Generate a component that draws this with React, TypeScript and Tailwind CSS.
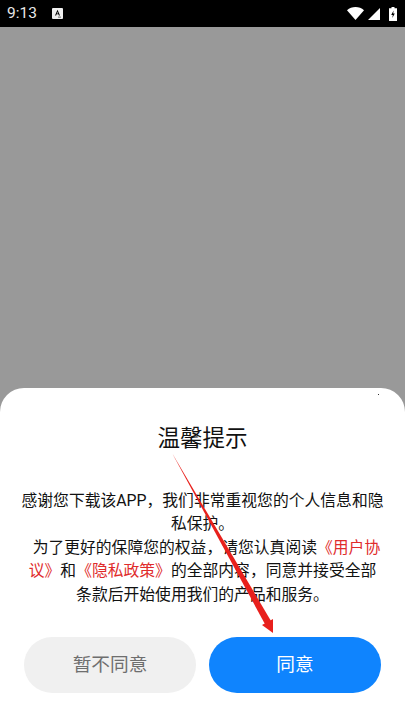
export default function App() {
  return (
    <div className="relative w-[405px] h-[720px] flex flex-col overflow-hidden bg-[#999999] font-['Roboto','Noto_Sans_CJK_SC',sans-serif]">
      <div className="h-[27px] shrink-0 bg-black flex items-center pl-[7px] pr-[8px] text-white">
        <span className="text-[15.5px] leading-none text-[#e8e8e8]">9:13</span>
        <svg className="ml-[15px]" width="11" height="11" viewBox="0 0 11 11">
          <rect width="11" height="11" rx="1" fill="#f0f0f0" />
          <path d="M5.5 1.8 8 7.6H6.9L6.4 6.3H4.6L4.1 7.6H3ZM5.5 3.8 4.9 5.4H6.1Z" fill="#000" />
          <rect x="6" y="8.6" width="3" height="1" fill="#666" />
        </svg>
        <span className="flex-1" />
        <svg width="17" height="13" viewBox="0 0 17 13">
          <path d="M0 3.2C4.6-1 12.4-1 17 3.2L8.5 13Z" fill="#fff" />
        </svg>
        <svg className="ml-[4px]" width="12" height="12" viewBox="0 0 12 12">
          <path d="M12 0V12H0Z" fill="#fff" />
        </svg>
        <svg className="ml-[9px]" width="8" height="14" viewBox="0 0 8 14">
          <path d="M2.5 0H5.5V1.2H8V14H0V1.2H2.5Z" fill="#fff" />
          <path d="M4.6 3.4 2.2 8H3.8L3.3 11 5.8 6.4H4.2Z" fill="#000" />
        </svg>
      </div>
      <div className="flex-1" />
      <div className="relative h-[332px] shrink-0 bg-white rounded-t-[24px] flex flex-col items-center">
        <span className="absolute right-[26px] top-[6px] w-[1px] h-[1px] bg-[#333]" />
        <h1 className="mt-[34px] text-[22.5px] leading-[32px] text-[#111]">温馨提示</h1>
        <div className="mt-[35px] w-[362px] text-center text-[15.8px] leading-[23.4px] text-[#111]">
          <p>感谢您下载该APP，我们非常重视您的个人信息和隐私保护。</p>
          <p>
            &nbsp;&nbsp;为了更好的保障您的权益，请您认真阅读
            <span className="text-[#e02b2b]">《用户协议》</span>和
            <span className="text-[#e02b2b]">《隐私政策》</span>
            的全部内容，同意并接受全部条款后开始使用我们的产品和服务。
          </p>
        </div>
        <div className="mt-[31px] w-[357px] flex gap-[13px]">
          <button className="flex-1 h-[56px] rounded-full bg-[#f0f0f0] text-[18.7px] text-[#6e6e6e]">暂不同意</button>
          <button className="flex-1 h-[56px] rounded-full bg-[#0f84fe] text-[18.7px] text-white">同意</button>
        </div>
      </div>
      <svg className="absolute left-0 top-0 pointer-events-none" width="405" height="720" viewBox="0 0 405 720">
        <path d="M172 453 L266 626 L271 621 Z" fill="#e8201c" />
        <path d="M262 625 L273 619 L273 633 Z" fill="#e8201c" />
      </svg>
    </div>
  );
}
